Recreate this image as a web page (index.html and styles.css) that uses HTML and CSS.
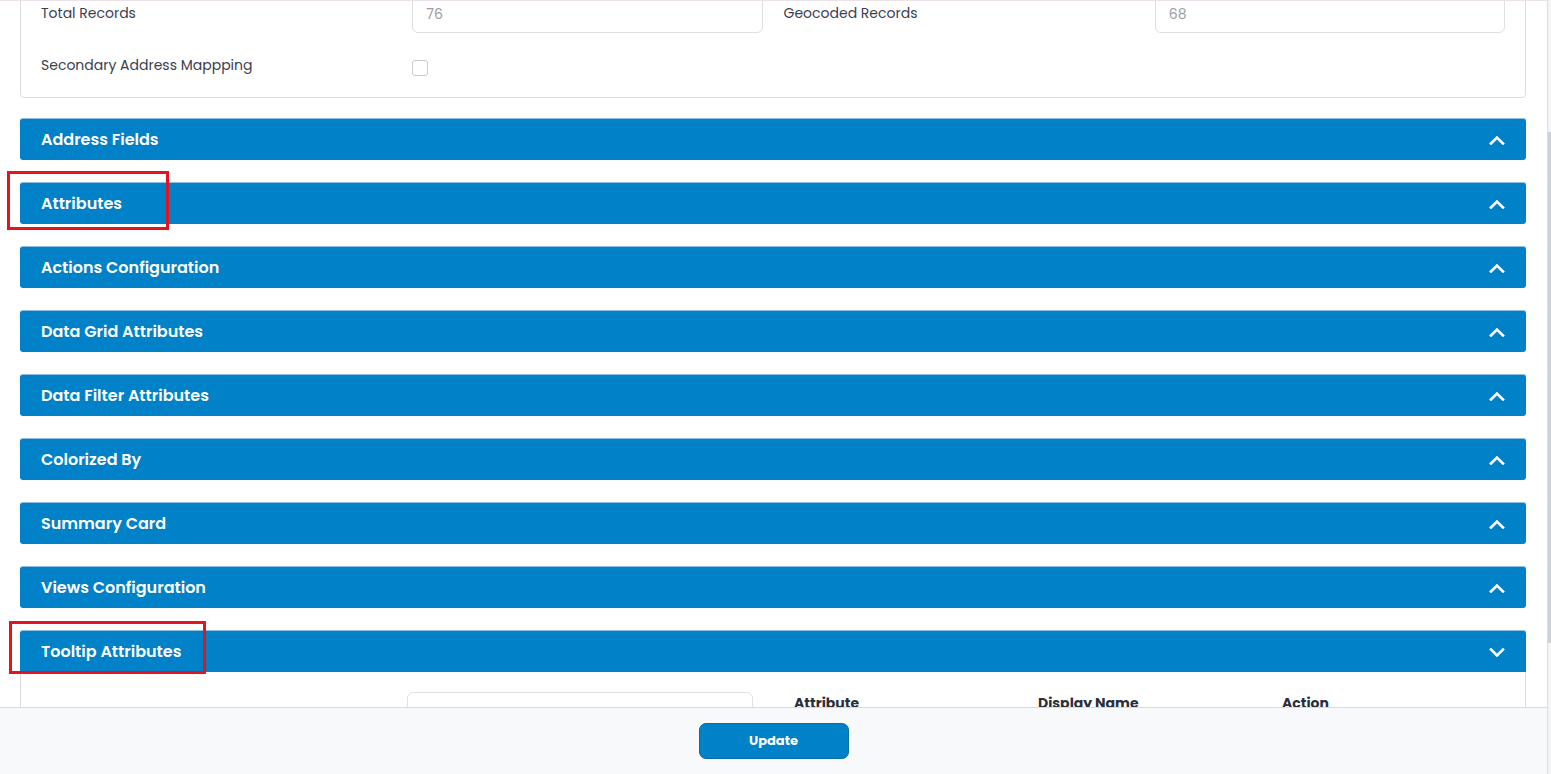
FILE: index.html
```html
<!DOCTYPE html>
<html lang="en">
<head>
<meta charset="utf-8">
<title>Layer Settings</title>
<link rel="stylesheet" href="styles.css">
</head>
<body>
<div class="app">
  <div class="main">
    <div class="scroll">
      <div class="content">
        <section class="card">
          <div class="row row-inputs">
            <label class="lbl">Total Records</label>
            <div class="field">76</div>
            <label class="lbl">Geocoded Records</label>
            <div class="field">68</div>
          </div>
          <div class="row row-check">
            <label class="lbl">Secondary Address Mappping</label>
            <div><span class="checkbox"></span></div>
          </div>
        </section>

        <div class="accordion">
          <div class="acc-item">
            <div class="acc-head"><span>Address Fields</span><svg class="chev" viewBox="0 0 16 10"><path d="M2 8.5 8 2.5l6 6"/></svg></div>
          </div>
          <div class="acc-item">
            <div class="acc-head"><span>Attributes</span><svg class="chev" viewBox="0 0 16 10"><path d="M2 8.5 8 2.5l6 6"/></svg></div>
            <div class="mark mark-attr"></div>
          </div>
          <div class="acc-item">
            <div class="acc-head"><span>Actions Configuration</span><svg class="chev" viewBox="0 0 16 10"><path d="M2 8.5 8 2.5l6 6"/></svg></div>
          </div>
          <div class="acc-item">
            <div class="acc-head"><span>Data Grid Attributes</span><svg class="chev" viewBox="0 0 16 10"><path d="M2 8.5 8 2.5l6 6"/></svg></div>
          </div>
          <div class="acc-item">
            <div class="acc-head"><span>Data Filter Attributes</span><svg class="chev" viewBox="0 0 16 10"><path d="M2 8.5 8 2.5l6 6"/></svg></div>
          </div>
          <div class="acc-item">
            <div class="acc-head"><span>Colorized By</span><svg class="chev" viewBox="0 0 16 10"><path d="M2 8.5 8 2.5l6 6"/></svg></div>
          </div>
          <div class="acc-item">
            <div class="acc-head"><span>Summary Card</span><svg class="chev" viewBox="0 0 16 10"><path d="M2 8.5 8 2.5l6 6"/></svg></div>
          </div>
          <div class="acc-item">
            <div class="acc-head"><span>Views Configuration</span><svg class="chev" viewBox="0 0 16 10"><path d="M2 8.5 8 2.5l6 6"/></svg></div>
          </div>
          <div class="acc-item open">
            <div class="acc-head"><span>Tooltip Attributes</span><svg class="chev" viewBox="0 0 16 10"><path d="M2 2.5 8 8.5l6-6"/></svg></div>
            <div class="mark mark-tip"></div>
            <div class="acc-body">
              <div class="spacer"></div>
              <div class="field field-tall"></div>
              <div class="tbl">
                <div class="th">Attribute</div>
                <div class="th">Display Name</div>
                <div class="th">Action</div>
              </div>
            </div>
          </div>
        </div>
      </div>
    </div>
    <footer class="footer">
      <button class="btn">Update</button>
    </footer>
  </div>
  <div class="scrollbar"><div class="thumb"></div></div>
</div>
</body>
</html>
```

FILE: styles.css
```css
* { box-sizing: border-box; }
html, body { margin: 0; height: 100%; }
body {
  font-family: "Poppins", "Open Sans", "Noto Sans", sans-serif;
  background: #ffffff;
  color: #3b4050;
  overflow: hidden;
}
.app { display: flex; height: 100vh; }
.main { flex: 1; display: flex; flex-direction: column; min-width: 0; }
.scroll {
  flex: 1;
  overflow: hidden;
  border-top: 1px solid #ece2ea;
}
.content { padding: 0 21px 0 20px; }

.card {
  margin-top: -27px;
  border: 1px solid #dcdde0;
  border-radius: 4px;
  padding: 20px 20px 20px;
  background: #fff;
}
.row {
  display: grid;
  grid-template-columns: 1fr 1fr 1fr 1fr;
  column-gap: 21px;
  align-items: center;
}
.row-inputs { height: 38px; }
.row-check { margin-top: 20px; align-items: start; }
.lbl { font-size: 14px; line-height: 24px; color: #3b4050; }
.row-inputs .lbl { margin-top: -2px; }
.field {
  height: 38px;
  border: 1px solid #dfe0e4;
  border-radius: 6px;
  padding: 0 13px;
  font-size: 14px;
  line-height: 36px;
  color: #9a9ca3;
  background: #fff;
}
.checkbox {
  display: block;
  width: 16px;
  height: 16px;
  margin-top: 7px;
  border: 1px solid #c9cbd1;
  border-radius: 3px;
  background: #fff;
}

.accordion { margin-top: 20px; }
.acc-item { position: relative; margin-bottom: 22px; }
.acc-head {
  height: 42px;
  background: #0181c8;
  border-radius: 3px;
  border-top: 1px solid #8dbfe0;
  display: flex;
  align-items: center;
  justify-content: space-between;
  padding: 0 21px 0 21px;
  color: #fff;
  font-weight: 600;
  font-size: 16px;
}
.chev {
  width: 16px;
  height: 10px;
  fill: none;
  stroke: #fff;
  stroke-width: 2.6;
  stroke-linecap: square;
}
.acc-item.open {
  border: 1px solid #dcdde0;
  border-radius: 4px;
}
.acc-item.open .acc-head {
  margin: -1px -1px 0;
  border-radius: 3px 3px 0 0;
}
.acc-body {
  display: grid;
  grid-template-columns: 346px 346px 1fr;
  column-gap: 20px;
  padding: 20px 20px 40px;
}
.field-tall { height: 40px; }
.tbl {
  margin-left: 21px;
  display: grid;
  grid-template-columns: 244px 244px 1fr;
}
.th {
  font-size: 14px;
  font-weight: 700;
  line-height: 22px;
  color: #2b2f3c;
}

.mark {
  position: absolute;
  border: 3px solid #e3141f;
  pointer-events: none;
}
.mark-attr { left: -13px; top: -11px; width: 162px; height: 59px; }
.mark-tip { left: -12px; top: -10px; width: 197px; height: 53px; }

.footer {
  height: 67px;
  flex: none;
  background: #f8f9fb;
  border-top: 1px solid #d8dade;
  display: flex;
  justify-content: center;
  padding-top: 15px;
}
.btn {
  width: 150px;
  height: 36px;
  background: #0181c8;
  border: 1px solid #0a6ba7;
  border-radius: 7px;
  color: #fff;
  font-family: inherit;
  font-weight: 700;
  font-size: 13px;
}

.scrollbar {
  width: 4px;
  flex: none;
  background: #f4f4f5;
  border-left: 1px solid #dedee0;
  padding-top: 132px;
}
.thumb { height: 511px; background: #cdd2da; }
```
